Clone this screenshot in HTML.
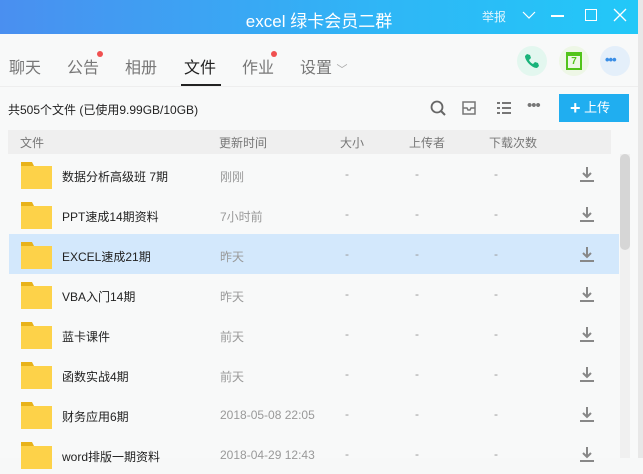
<html><head><style>
*{margin:0;padding:0;box-sizing:border-box}
body{width:643px;height:458px;overflow:hidden;background:#f7f8f8;font-family:"Liberation Sans","Noto Sans CJK SC",sans-serif;position:relative}
.title{position:absolute;left:0;top:0;width:638px;height:34px;background:linear-gradient(90deg,#4a8ff0,#2fb6f6 60%,#22c8f8);color:#fff}
.title .t{position:absolute;left:0;width:638px;text-align:center;top:7px;font-size:17px}
.ab{position:absolute;top:0;left:638px;width:5px;height:458px;background:#e8e8e8}
.main{position:absolute;left:0;top:34px;width:638px;height:424px;background:#f8f9f9}
.tab{position:absolute;top:20px;font-size:16px;color:#777}
.dot{position:absolute;width:6px;height:6px;border-radius:3px;background:#f05050}
.circ{position:absolute;top:12px;width:30px;height:30px;border-radius:15px}
.row{position:absolute;left:9px;width:610px;height:40px;font-size:12px}
.fold{position:absolute;left:12px;top:8px;width:31px;height:30px}
.nm{position:absolute;left:53px;top:14px;color:#222}
.tm{position:absolute;left:211px;top:14px;color:#999}
.ds{position:absolute;top:13px;color:#999}
.dl{position:absolute;left:570px;top:12px;width:16px;height:16px}
</style></head><body>
<div class="title"><div class="t">excel 绿卡会员二群</div>
<span style="position:absolute;left:482px;top:8px;font-size:12px;opacity:.85">举报</span>
<svg style="position:absolute;left:522px;top:10px" width="14" height="10"><path d="M1 2l6 6 6-6" stroke="#fff" fill="none" stroke-width="1.2"/></svg>
<div style="position:absolute;left:551px;top:15px;width:13px;height:1.5px;background:#fff"></div>
<div style="position:absolute;left:585px;top:9px;width:12px;height:12px;border:1.5px solid #fff"></div>
<svg style="position:absolute;left:613px;top:8px" width="14" height="14"><path d="M1 1l12 12M13 1L1 13" stroke="#fff" stroke-width="1.3"/></svg>
</div>
<div class="ab"></div>
<div class="main">
<span class="tab" style="left:9px">聊天</span>
<span class="tab" style="left:67px">公告</span><div class="dot" style="left:97px;top:17px"></div>
<span class="tab" style="left:125px">相册</span>
<span class="tab" style="left:184px;color:#222">文件</span><div style="position:absolute;left:181px;top:50px;width:40px;height:2px;background:#222"></div>
<span class="tab" style="left:242px">作业</span><div class="dot" style="left:271px;top:17px"></div>
<span class="tab" style="left:300px">设置 <span style="font-size:11px;color:#aaa">﹀</span></span>
<div class="circ" style="left:517px;background:#e3f7ef"></div>
<svg style="position:absolute;left:524px;top:19px" width="16" height="16"><path d="M3 1l3 1 1 3-2 2c1 2 2 3 4 4l2-2 3 1 1 3-2 2C8 15 1 8 1 3z" fill="#19b37a"/></svg>
<div class="circ" style="left:559px;background:#eef7e6"></div>
<div style="position:absolute;left:566px;top:18px;width:16px;height:18px;border:2px solid #52c41a;border-top-width:4px;font-size:10px;color:#52c41a;text-align:center;font-weight:bold;line-height:12px">7</div>
<div class="circ" style="left:600px;background:#e4effa"></div>
<span style="position:absolute;left:605px;top:18px;color:#3a8ee6;font-size:13px;font-weight:bold;letter-spacing:-1px">•••</span>
<div style="position:absolute;left:0;top:52px;width:638px;height:1px;background:#eee"></div>
<span style="position:absolute;left:8px;top:67px;font-size:12px;color:#222">共505个文件 (已使用9.99GB/10GB)</span>
<svg style="position:absolute;left:430px;top:66px" width="16" height="16"><circle cx="7" cy="7" r="5.5" stroke="#666" stroke-width="1.8" fill="none"/><path d="M11 11l4 4" stroke="#666" stroke-width="2"/></svg>
<svg style="position:absolute;left:461px;top:66px" width="16" height="16"><path d="M2 8V2h12v6M2 8v6h12V8M2 8h4l1 2h2l1-2h4" stroke="#777" stroke-width="1.5" fill="none"/></svg>
<svg style="position:absolute;left:497px;top:67px" width="14" height="14"><path d="M0 2h3M5 2h9M0 7h3M5 7h9M0 12h3M5 12h9" stroke="#777" stroke-width="2"/></svg>
<span style="position:absolute;left:527px;top:63px;color:#777;font-size:15px;letter-spacing:-1px">•••</span>
<div style="position:absolute;left:559px;top:60px;width:70px;height:28px;background:#20aef0;color:#fff;font-size:13px;line-height:28px;padding-left:11px"><b style="font-size:18px;vertical-align:-2px">+</b> 上传</div>
<div style="position:absolute;left:8px;top:96px;width:603px;height:24px;background:#efefef;font-size:12px;color:#777">
<span style="position:absolute;left:12px;top:4px">文件</span><span style="position:absolute;left:211px;top:4px">更新时间</span><span style="position:absolute;left:332px;top:4px">大小</span><span style="position:absolute;left:401px;top:4px">上传者</span><span style="position:absolute;left:481px;top:4px">下载次数</span></div>
<div style="position:absolute;left:620px;top:120px;width:10px;height:304px;background:#f0f0f0"></div>
<div style="position:absolute;left:620px;top:120px;width:10px;height:96px;border-radius:5px;background:#d6d6d6"></div>
</div>
<div id="rows"></div>
<script>
var d=[["数据分析高级班 7期","刚刚"],["PPT速成14期资料","7小时前"],["EXCEL速成21期","昨天"],["VBA入门14期","昨天"],["蓝卡课件","前天"],["函数实战4期","前天"],["财务应用6期","2018-05-08 22:05"],["word排版一期资料","2018-04-29 12:43"]],h="";
d.forEach(function(r,i){h+='<div class="row" style="top:'+(154+i*40)+'px;'+(i==2?'background:#d3e8fc':'')+'"><svg class="fold" viewBox="0 0 31 30"><path d="M0 0h11l2 4H0z" fill="#e8b21a"/><rect y="4" width="31" height="23" fill="#fdd249"/></svg><span class="nm">'+r[0]+'</span><span class="tm">'+r[1]+'</span><span class="ds" style="left:336px">-</span><span class="ds" style="left:406px">-</span><span class="ds" style="left:485px">-</span><svg class="dl"><path d="M8 1v10M4 7l4 4 4-4" stroke="#888" stroke-width="2" fill="none"/><path d="M1 15h14" stroke="#888" stroke-width="2"/></svg></div>'});
document.getElementById('rows').innerHTML=h;
</script>
</body></html>
